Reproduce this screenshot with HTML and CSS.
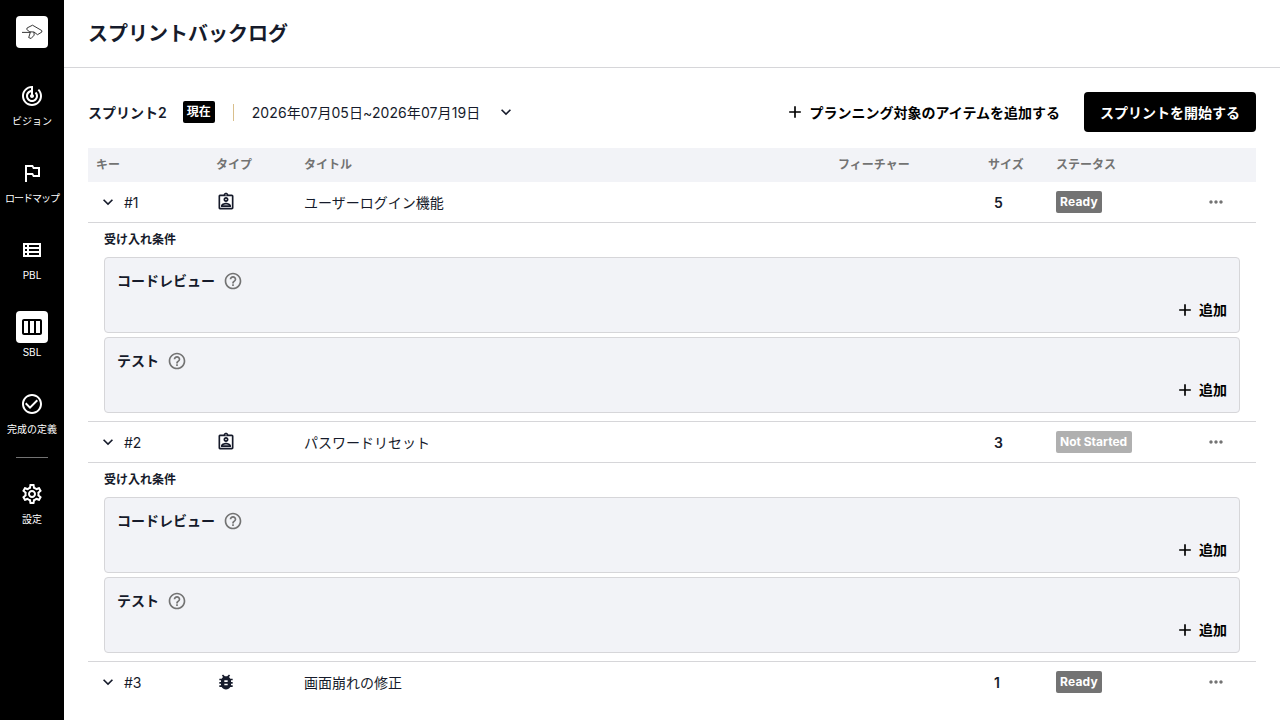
FILE: index.html
```html
<!DOCTYPE html>
<html lang="ja">
<head>
<meta charset="utf-8">
<title>スプリントバックログ</title>
<link rel="stylesheet" href="styles.css">
</head>
<body>
<svg class="defs" width="0" height="0">
  <symbol id="vision" viewBox="0 0 24 24"><path d="M19.07 4.93l-1.41 1.41C19.1 7.79 20 9.79 20 12c0 4.42-3.58 8-8 8s-8-3.58-8-8c0-4.08 3.05-7.44 7-7.93v2.02C8.16 6.57 6 9.03 6 12c0 3.31 2.69 6 6 6s6-2.69 6-6c0-1.66-.67-3.16-1.76-4.24l-1.41 1.41C15.55 9.9 16 10.9 16 12c0 2.21-1.79 4-4 4s-4-1.79-4-4c0-1.86 1.28-3.41 3-3.86v2.14c-.6.35-1 .98-1 1.72 0 1.1.9 2 2 2s2-.9 2-2c0-.74-.4-1.38-1-1.72V2h-1C6.48 2 2 6.48 2 12s4.48 10 10 10 10-4.48 10-10c0-2.76-1.12-5.26-2.93-7.07z"/></symbol>
  <symbol id="flag" viewBox="0 0 24 24"><path d="M14 6l-1-2H5v17h2v-7h5l1 2h7V6h-6zm4 8h-4l-1-2H7V6h5l1 2h5v6z"/></symbol>
  <symbol id="list" viewBox="0 0 24 24"><path d="M3 5v14h18V5H3zm4 2v2H5V7h2zm-2 6v-2h2v2H5zm0 2h2v2H5v-2zm14 2H9v-2h10v2zm0-4H9v-2h10v2zm0-4H9V7h10v2z"/></symbol>
  <symbol id="columns" viewBox="0 0 24 24"><path d="M20 4H4c-1.1 0-2 .9-2 2v12c0 1.1.9 2 2 2h16c1.1 0 2-.9 2-2V6c0-1.1-.9-2-2-2zM8 18H4V6h4v12zm6 0h-4V6h4v12zm6 0h-4V6h4v12z"/></symbol>
  <symbol id="check" viewBox="0 0 24 24"><path d="M16.59 7.58L10 14.17l-3.59-3.58L5 12l5 5 8-8zM12 2C6.48 2 2 6.48 2 12s4.48 10 10 10 10-4.48 10-10S17.52 2 12 2zm0 18c-4.42 0-8-3.58-8-8s3.58-8 8-8 8 3.58 8 8-3.58 8-8 8z"/></symbol>
  <symbol id="gear" viewBox="0 0 24 24"><path d="M19.43 12.98c.04-.32.07-.64.07-.98 0-.34-.03-.66-.07-.98l2.11-1.65c.19-.15.24-.42.12-.64l-2-3.46c-.09-.16-.26-.25-.44-.25-.06 0-.12.01-.17.03l-2.49 1c-.52-.4-1.08-.73-1.69-.98l-.38-2.65C14.46 2.18 14.25 2 14 2h-4c-.25 0-.46.18-.49.42l-.38 2.65c-.61.25-1.17.59-1.69.98l-2.49-1c-.06-.02-.12-.03-.18-.03-.17 0-.34.09-.43.25l-2 3.46c-.13.22-.07.49.12.64l2.11 1.65c-.04.32-.07.65-.07.98 0 .33.03.66.07.98l-2.11 1.65c-.19.15-.24.42-.12.64l2 3.46c.09.16.26.25.44.25.06 0 .12-.01.17-.03l2.49-1c.52.4 1.08.73 1.69.98l.38 2.65c.03.24.24.42.49.42h4c.25 0 .46-.18.49-.42l.38-2.65c.61-.25 1.17-.59 1.69-.98l2.49 1c.06.02.12.03.18.03.17 0 .34-.09.43-.25l2-3.46c.12-.22.07-.49-.12-.64l-2.11-1.65zm-1.98-1.71c.04.31.05.52.05.73 0 .21-.02.43-.05.73l-.14 1.13.89.7 1.08.84-.7 1.21-1.27-.51-1.04-.42-.9.68c-.43.32-.84.56-1.25.73l-1.06.43-.16 1.13-.2 1.35h-1.4l-.19-1.35-.16-1.13-1.06-.43c-.43-.18-.83-.41-1.23-.71l-.91-.7-1.06.43-1.27.51-.7-1.21 1.08-.84.89-.7-.14-1.13c-.03-.31-.05-.54-.05-.74s.02-.43.05-.73l.14-1.13-.89-.7-1.08-.84.7-1.21 1.27.51 1.04.42.9-.68c.43-.32.84-.56 1.25-.73l1.06-.43.16-1.13.2-1.35h1.39l.19 1.35.16 1.13 1.06.43c.43.18.83.41 1.23.71l.91.7 1.06-.43 1.27-.51.7 1.21-1.07.85-.89.7.14 1.13zM12 8c-2.21 0-4 1.79-4 4s1.79 4 4 4 4-1.79 4-4-1.79-4-4-4zm0 6c-1.1 0-2-.9-2-2s.9-2 2-2 2 .9 2 2-.9 2-2 2z"/></symbol>
  <symbol id="story" viewBox="0 0 24 24"><path d="M19 3h-4.18C14.4 1.84 13.3 1 12 1c-1.3 0-2.4.84-2.82 2H5c-.14 0-.27.01-.4.04-.39.08-.74.28-1.01.55-.18.18-.33.4-.43.64-.1.23-.16.49-.16.77v14c0 .27.06.54.16.78s.25.45.43.64c.27.27.62.47 1.01.55.13.02.26.03.4.03h14c1.1 0 2-.9 2-2V5c0-1.1-.9-2-2-2zm-7-.25c.41 0 .75.34.75.75s-.34.75-.75.75-.75-.34-.75-.75.34-.75.75-.75zM19 19H5V5h14v14zM12 6c-1.65 0-3 1.35-3 3s1.35 3 3 3 3-1.35 3-3-1.35-3-3-3zm0 4c-.55 0-1-.45-1-1s.45-1 1-1 1 .45 1 1-.45 1-1 1zm-6 6.47V18h12v-1.53c0-2.5-3.97-3.58-6-3.58s-6 1.07-6 3.58zm2.31-.47c.69-.56 2.38-1.12 3.69-1.12s3.01.56 3.69 1.12H8.31z"/></symbol>
  <symbol id="bug" viewBox="0 0 24 24"><path d="M20 8h-2.81c-.45-.78-1.07-1.45-1.82-1.96L17 4.41 15.59 3l-2.17 2.17C12.96 5.06 12.49 5 12 5c-.49 0-.96.06-1.41.17L8.41 3 7 4.41l1.62 1.63C7.88 6.55 7.26 7.22 6.81 8H4v2h2.09c-.05.33-.09.66-.09 1v1H4v2h2v1c0 .34.04.67.09 1H4v2h2.81c1.04 1.79 2.97 3 5.19 3s4.15-1.21 5.19-3H20v-2h-2.09c.05-.33.09-.66.09-1v-1h2v-2h-2v-1c0-.34-.04-.67-.09-1H20V8zm-6 8h-4v-2h4v2zm0-4h-4v-2h4v2z"/></symbol>
  <symbol id="help" viewBox="0 0 24 24"><path d="M11 18h2v-2h-2v2zm1-16C6.48 2 2 6.48 2 12s4.48 10 10 10 10-4.48 10-10S17.52 2 12 2zm0 18c-4.41 0-8-3.59-8-8s3.59-8 8-8 8 3.59 8 8-3.59 8-8 8zm0-14c-2.21 0-4 1.79-4 4h2c0-1.1.9-2 2-2s2 .9 2 2c0 2-3 1.75-3 5h2c0-2.25 3-2.5 3-5 0-2.21-1.79-4-4-4z"/></symbol>
  <symbol id="chevron" viewBox="0 0 24 24"><path d="M16.59 8.59L12 13.17 7.41 8.59 6 10l6 6 6-6z"/></symbol>
  <symbol id="plus" viewBox="0 0 24 24"><path d="M19 13h-6v6h-2v-6H5v-2h6V5h2v6h6v2z"/></symbol>
  <symbol id="more" viewBox="0 0 24 24"><path d="M6 10c-1.1 0-2 .9-2 2s.9 2 2 2 2-.9 2-2-.9-2-2-2zm12 0c-1.1 0-2 .9-2 2s.9 2 2 2 2-.9 2-2-.9-2-2-2zm-6 0c-1.1 0-2 .9-2 2s.9 2 2 2 2-.9 2-2-.9-2-2-2z"/></symbol>
</svg>
<div class="app">
  <nav class="side">
    <div class="logo"><svg width="32" height="32" viewBox="0 0 32 32"><path d="M6 16.400h8.300l-3.600-3 .5-1.500 5.300-2.700 9.200 5.300.2 1.500-4.400 2.700-3.500-2.700-4-.2M14.300 16.400l-1.600 5.200 2.400.9 3.100-3.400-.3-3.100"/></svg></div>
    <a class="nav"><span class="tile"><svg class="i24"><use href="#vision"/></svg></span><span>ビジョン</span></a>
    <a class="nav"><span class="tile"><svg class="i24"><use href="#flag"/></svg></span><span class="tight">ロードマップ</span></a>
    <a class="nav"><span class="tile"><svg class="i24"><use href="#list"/></svg></span><span>PBL</span></a>
    <a class="nav active"><span class="tile"><svg class="i24"><use href="#columns"/></svg></span><span>SBL</span></a>
    <a class="nav"><span class="tile"><svg class="i24"><use href="#check"/></svg></span><span>完成の定義</span></a>
    <hr class="rule">
    <a class="nav last"><span class="tile"><svg class="i24"><use href="#gear"/></svg></span><span>設定</span></a>
  </nav>
  <main class="main">
    <header class="header"><h1>スプリントバックログ</h1></header>
    <div class="content">
      <div class="toolbar">
        <strong class="sprint">スプリント2</strong>
        <span class="badge now">現在</span>
        <span class="bar"></span>
        <span class="dates">2026年07月05日~2026年07月19日</span>
        <svg class="i20"><use href="#chevron"/></svg>
        <button class="add plan"><svg class="i20"><use href="#plus"/></svg><span>プランニング対象のアイテムを追加する</span></button>
        <button class="start">スプリントを開始する</button>
      </div>
      <div class="row head"><span>キー</span><span>タイプ</span><span>タイトル</span><span>フィーチャー</span><span>サイズ</span><span>ステータス</span></div>

      <div class="row item">
        <span class="key"><svg class="i20"><use href="#chevron"/></svg><span class="label">#1</span></span><svg class="i20"><use href="#story"/></svg><span class="label">ユーザーログイン機能</span><span></span><span class="size label">5</span><span><span class="badge ready">Ready</span></span><svg class="i20 more"><use href="#more"/></svg>
      </div>
      <section class="criteria">
        <h2>受け入れ条件</h2>
        <div class="card"><h3>コードレビュー<svg class="i20"><use href="#help"/></svg></h3><button class="add"><svg class="i20"><use href="#plus"/></svg>追加</button></div>
        <div class="card"><h3>テスト<svg class="i20"><use href="#help"/></svg></h3><button class="add"><svg class="i20"><use href="#plus"/></svg>追加</button></div>
      </section>

      <div class="row item">
        <span class="key"><svg class="i20"><use href="#chevron"/></svg><span class="label">#2</span></span><svg class="i20"><use href="#story"/></svg><span class="label">パスワードリセット</span><span></span><span class="size label">3</span><span><span class="badge pending">Not Started</span></span><svg class="i20 more"><use href="#more"/></svg>
      </div>
      <section class="criteria">
        <h2>受け入れ条件</h2>
        <div class="card"><h3>コードレビュー<svg class="i20"><use href="#help"/></svg></h3><button class="add"><svg class="i20"><use href="#plus"/></svg>追加</button></div>
        <div class="card"><h3>テスト<svg class="i20"><use href="#help"/></svg></h3><button class="add"><svg class="i20"><use href="#plus"/></svg>追加</button></div>
      </section>

      <div class="row item final">
        <span class="key"><svg class="i20"><use href="#chevron"/></svg><span class="label">#3</span></span><svg class="i20"><use href="#bug"/></svg><span class="label">画面崩れの修正</span><span></span><span class="size label">1</span><span><span class="badge ready">Ready</span></span><svg class="i20 more"><use href="#more"/></svg>
      </div>
    </div>
  </main>
</div>
</body>
</html>
```
FILE: styles.css
```css
* { box-sizing: border-box; }
body {
  margin: 0;
  font-family: Inter, "Noto Sans CJK JP", sans-serif;
  font-size: 14px;
  line-height: 20px;
  color: #161b2b;
  background: #fff;
}
h1, h2, h3 { margin: 0; }
svg { fill: currentColor; flex: none; display: block; }
.defs { position: absolute; }
.i20 { width: 20px; height: 20px; }
.i24 { width: 24px; height: 24px; }
.app { display: flex; height: 720px; overflow: hidden; }

.side {
  width: 64px;
  flex: none;
  background: #000;
  color: #fff;
  display: flex;
  flex-direction: column;
  align-items: center;
  padding-top: 16px;
}
.logo { width: 32px; height: 32px; border-radius: 4px; background: #fff; margin-bottom: 32px; }
.logo path { fill: none; stroke: #222; stroke-width: 0.9; stroke-linejoin: round; }
.nav {
  display: flex;
  flex-direction: column;
  align-items: center;
  height: 49px;
  margin-bottom: 28px;
  font-size: 10px;
  line-height: 19px;
  white-space: nowrap;
}
.tight { letter-spacing: -1px; }
.tile { width: 32px; height: 32px; border-radius: 4px; display: grid; place-items: center; flex: none; }
.active .tile { background: #fff; color: #000; }
.rule { width: 32px; height: 1px; margin: -8px 0 20px; border: 0; background: #737373; flex: none; }

.main { flex: 1; min-width: 0; }
.header { height: 68px; border-bottom: 1px solid #d6d6d9; padding: 0 24px; display: flex; align-items: center; }
h1 { font-size: 20px; line-height: 28px; font-weight: 700; }
.content { padding: 24px 24px 0; }
.toolbar { display: flex; align-items: center; height: 40px; margin-bottom: 16px; }
.sprint { font-weight: 600; margin-right: 16px; padding-top: 2px; }
.badge {
  display: inline-block;
  height: 22px;
  line-height: 22px;
  padding: 0 4px;
  border-radius: 2px;
  font-size: 12px;
  font-weight: 700;
  color: #fff;
  vertical-align: top;
  white-space: nowrap;
}
.now { background: #000; }
.ready { background: #737373; width: 46px; letter-spacing: 0.2px; }
.pending { background: #b0b0b0; width: 76px; }
.bar { width: 1px; height: 17px; background: #d9bf8c; margin: 0 18px; }
.dates { width: 228px; margin-right: 16px; padding-top: 2px; letter-spacing: 0.08px; white-space: nowrap; }
button { font: inherit; font-weight: 600; border: 0; background: none; color: #000; padding: 0; }
.add { display: flex; align-items: center; gap: 4px; height: 20px; }
.plan { margin-left: auto; margin-right: 24px; }
.plan span { padding-top: 2px; }
.start { height: 40px; padding: 2px 16px 0; border-radius: 4px; background: #000; color: #fff; }

.row {
  display: grid;
  grid-template-columns: 120px 88px 534px 150px 68px 140px 52px;
  align-items: center;
  padding: 0 8px;
}
.head { height: 34px; background: #f2f3f7; color: #737373; font-size: 12px; font-weight: 600; }
.item { height: 41px; border-bottom: 1px solid #d6d6d9; }
.final { border-bottom-color: transparent; }
.label { padding-top: 2px; }
.key { display: flex; align-items: center; gap: 6px; padding-left: 2px; }
.size { font-weight: 600; padding-left: 6px; }
.more { color: #737373; margin-left: 10px; }

.criteria { padding: 8px 16px; border-bottom: 1px solid #d6d6d9; height: 199px; }
h2 { font-size: 12px; line-height: 18px; font-weight: 600; margin-bottom: 8px; }
.card {
  height: 76px;
  border: 1px solid #d6d6d9;
  border-radius: 4px;
  background: #f2f3f7;
  padding: 13px 12px 12px;
  margin-bottom: 4px;
  display: flex;
  flex-direction: column;
  justify-content: space-between;
}
h3 { font-size: 14px; line-height: 20px; font-weight: 600; display: flex; align-items: center; gap: 8px; }
h3 svg { color: #737373; }
.card .add { align-self: flex-end; }
```
